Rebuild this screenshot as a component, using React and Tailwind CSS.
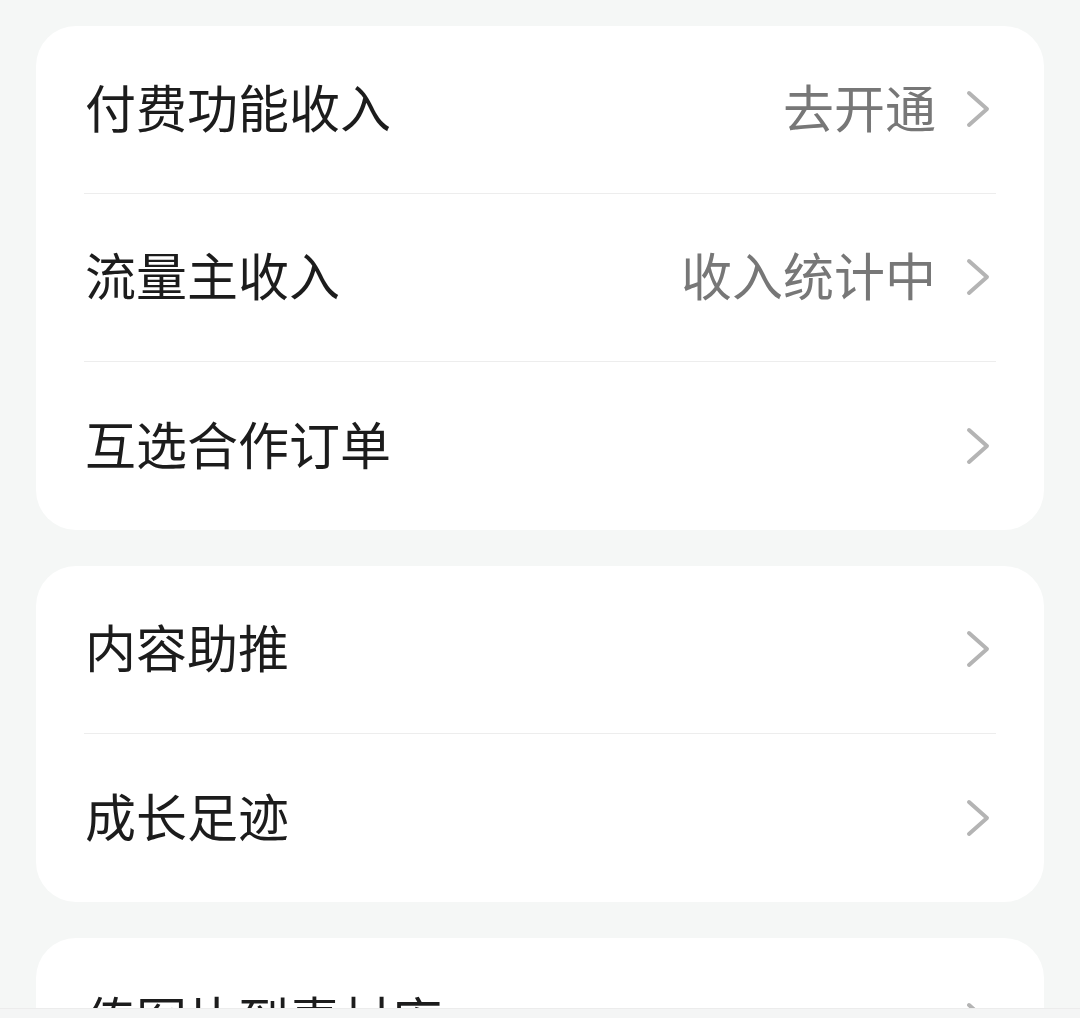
import React from "react";

const Chevron = () => (
  <svg width="24" height="38" viewBox="0 0 24 38" fill="none" className="ml-[30px] mr-[6px] mt-[5px] shrink-0">
    <path d="M3 3 L21 19 L3 35" stroke="#b4b4b4" strokeWidth="4" strokeLinecap="round" strokeLinejoin="round" />
  </svg>
);

const Row = ({ title, value, last }) => (
  <div>
    <div className={`flex items-center pb-[6px] pl-[49px] pr-12 ${last ? "h-[168px]" : "h-[167px]"}`}>
      <div className="flex-1 text-[51px] leading-none text-[#1c1c1c]">{title}</div>
      {value ? <div className="text-[51px] leading-none text-[#777777]">{value}</div> : null}
      <Chevron />
    </div>
    {!last ? <div className="mx-12 h-px bg-[#ededed]" /> : null}
  </div>
);

const Card = ({ rows }) => (
  <div className="overflow-hidden rounded-[40px] bg-white">
    {rows.map((r, i) => (
      <Row key={i} title={r.title} value={r.value} last={i === rows.length - 1} />
    ))}
  </div>
);

export default function App() {
  return (
    <div
      className="relative h-[1018px] w-[1080px] overflow-hidden bg-[#f5f7f6]"
      style={{ fontFamily: '"Noto Sans CJK SC", "Noto Sans", sans-serif' }}
    >
      <div className="flex flex-col gap-[36px] px-[36px] pt-[26px]">
        <Card
          rows={[
            { title: "付费功能收入", value: "去开通" },
            { title: "流量主收入", value: "收入统计中" },
            { title: "互选合作订单" },
          ]}
        />
        <Card rows={[{ title: "内容助推" }, { title: "成长足迹" }]} />
        <Card rows={[{ title: "传图片到素材库" }, { title: "更多" }]} />
      </div>
      <div className="absolute bottom-0 left-0 right-0 h-[10px] border-t border-[#ececec] bg-[#f4f5f5]" />
    </div>
  );
}
